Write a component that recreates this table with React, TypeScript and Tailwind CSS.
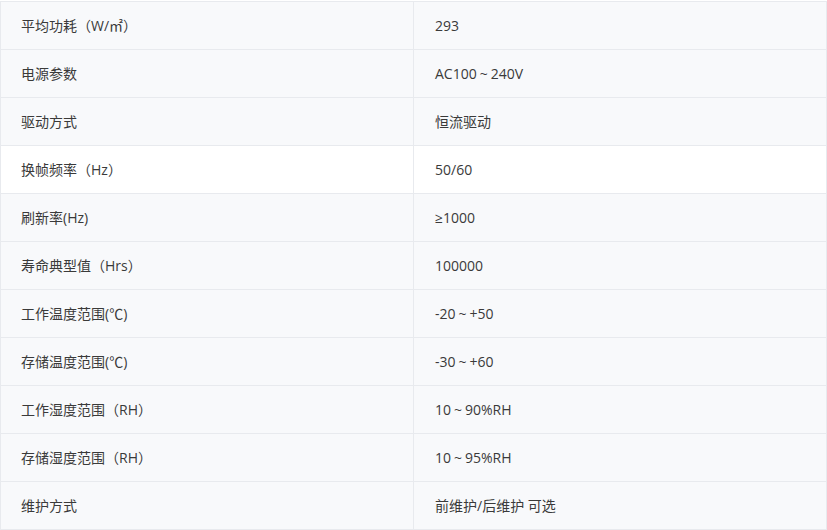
const rows: [string, string][] = [
  ["平均功耗（W/㎡）", "293"],
  ["电源参数", "AC100～240V"],
  ["驱动方式", "恒流驱动"],
  ["换帧频率（Hz）", "50/60"],
  ["刷新率(Hz)", "≥1000"],
  ["寿命典型值（Hrs）", "100000"],
  ["工作温度范围(℃)", "-20～+50"],
  ["存储温度范围(℃)", "-30～+60"],
  ["工作湿度范围（RH）", "10～90%RH"],
  ["存储湿度范围（RH）", "10～95%RH"],
  ["维护方式", "前维护/后维护 可选"],
]

// full-width tilde drawn as a small centred "~", like the original font does
function Value({ text }: { text: string }) {
  const parts = text.split("～")
  return (
    <span>
      {parts.map((p, i) => (
        <span key={i}>
          {i > 0 && <span className="inline-block w-[14px] text-center">~</span>}
          {p}
        </span>
      ))}
    </span>
  )
}

export default function App() {
  return (
    <div
      className="w-[827px] h-[530px] overflow-hidden bg-white pt-px text-[14px] text-[#3a3a3a]"
      style={{ fontFamily: '"Open Sans", "Liberation Sans", "Noto Sans CJK SC", sans-serif' }}
    >
      <div className="w-[827px] border-l border-r border-b border-[#e8eaee]">
        {rows.map(([label, value], i) => (
          <div
            key={label}
            className={`grid grid-cols-[413px_1fr] h-[48px] border-t border-[#e8eaee] ${
              i === 3 ? "bg-white" : "bg-[#f8f9fb]"
            }`}
          >
            <div className="flex items-center pl-[20px] border-r border-[#e8eaee]">{label}</div>
            <div className="flex items-center pl-[21px]">
              <Value text={value} />
            </div>
          </div>
        ))}
      </div>
    </div>
  )
}
